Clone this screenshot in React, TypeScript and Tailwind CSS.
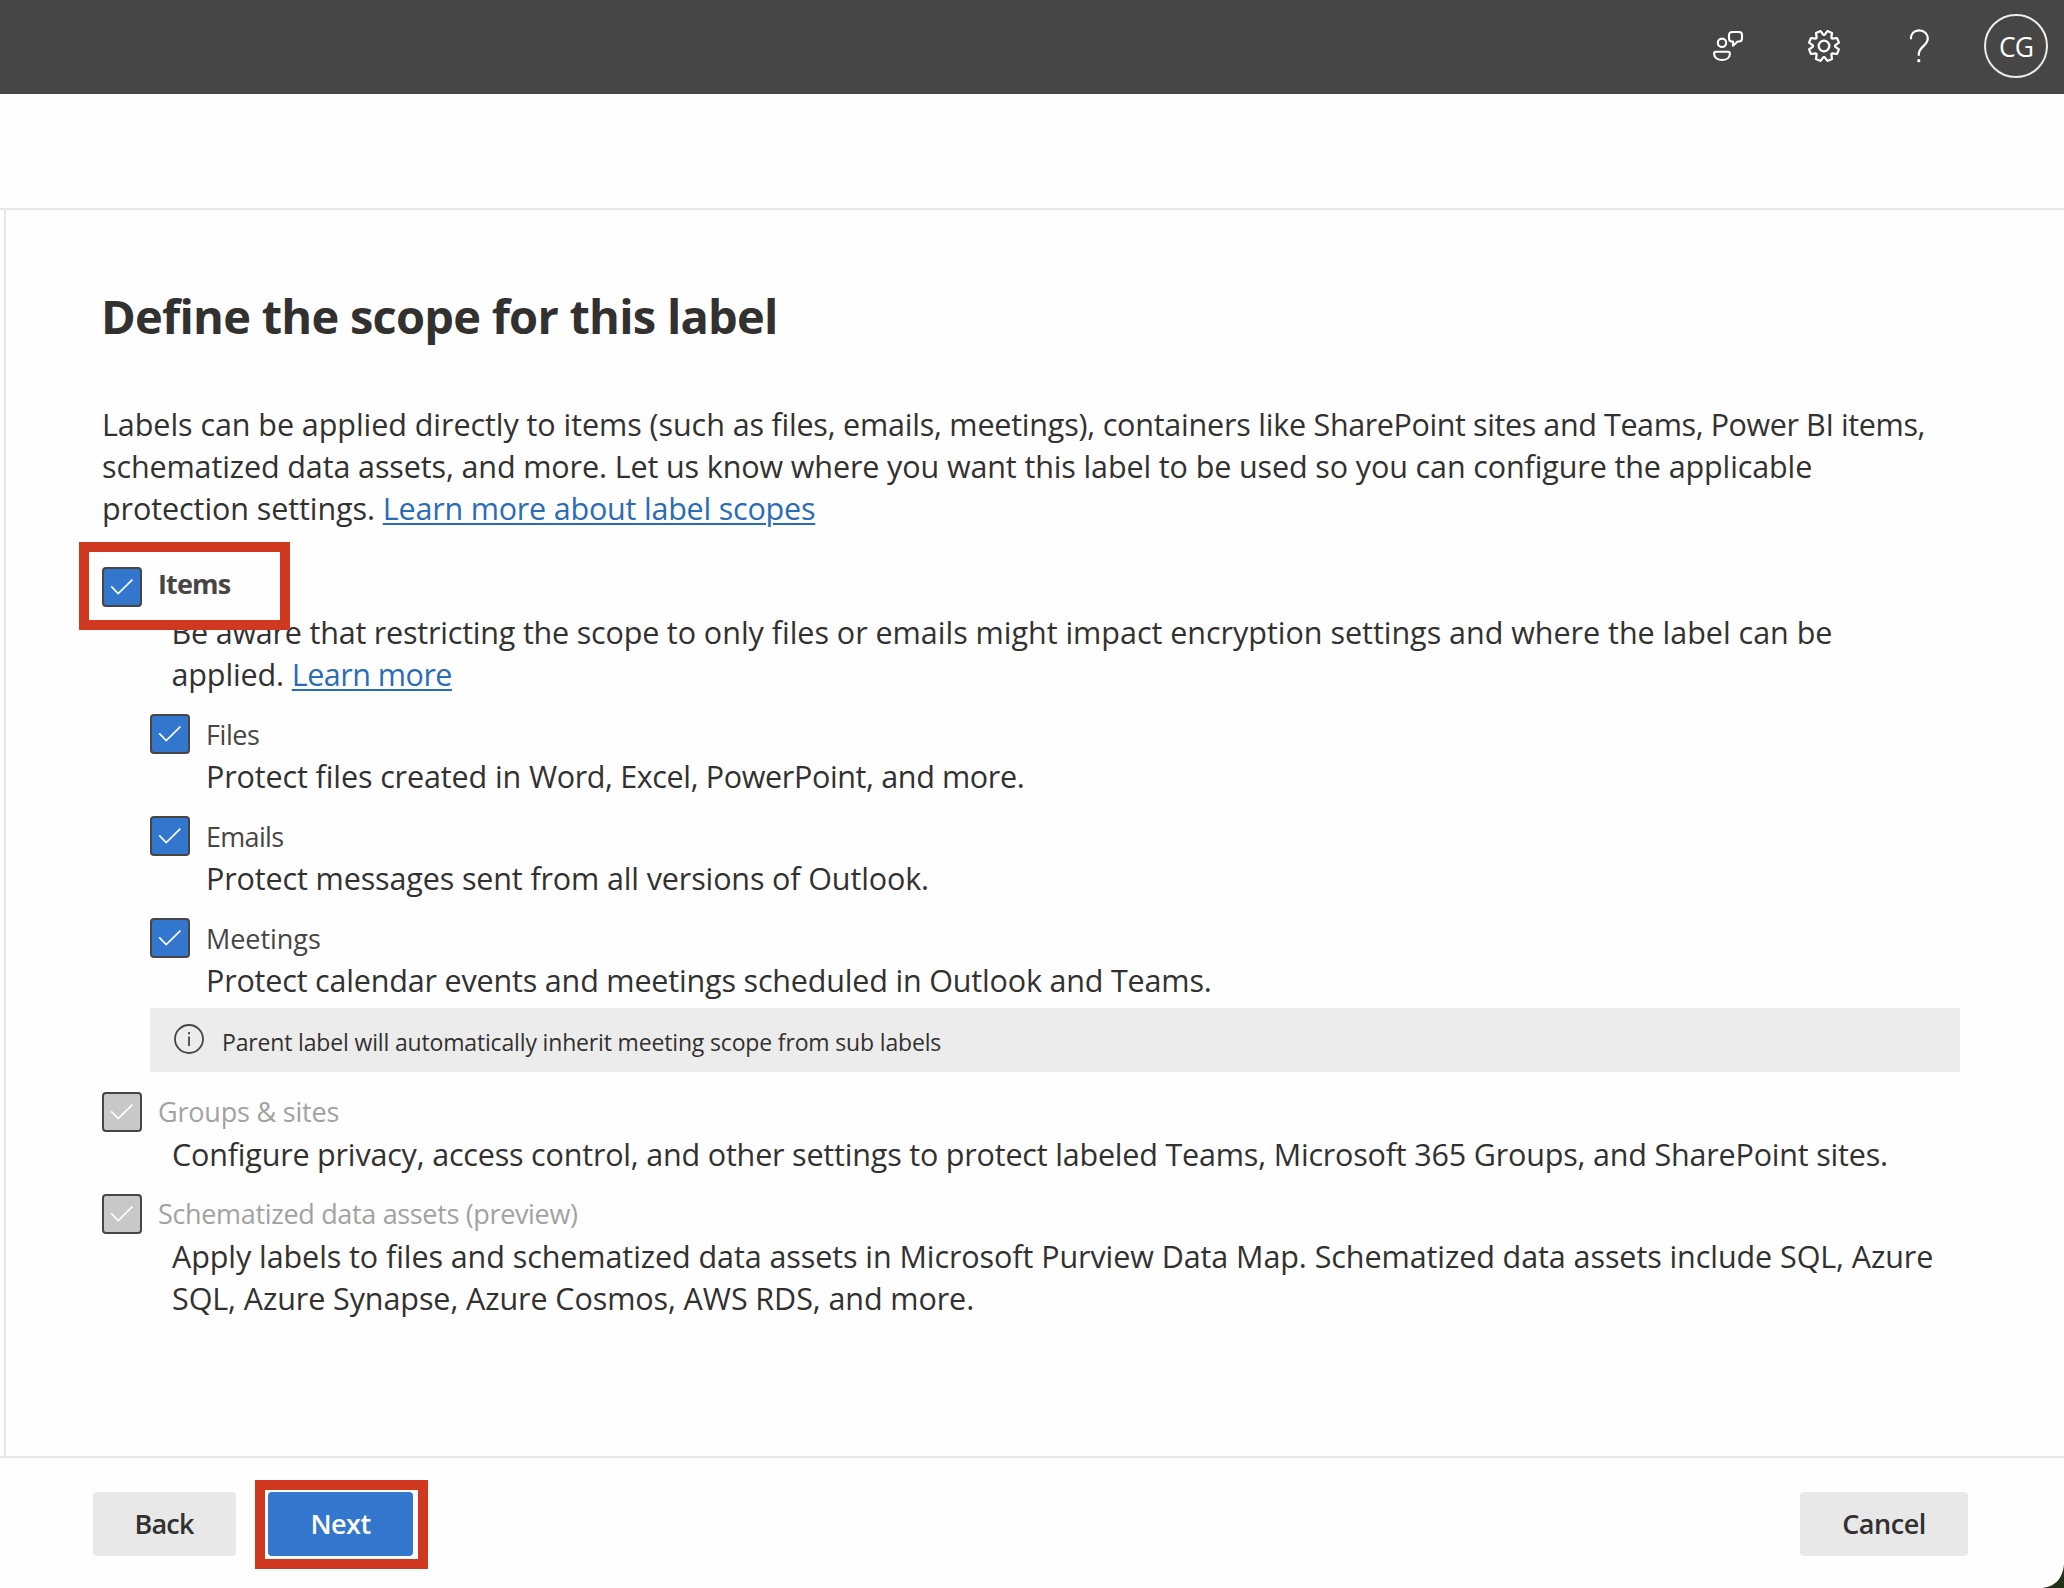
import React from "react";
import type { ReactNode } from "react";

const TOOTH: [number, number][] = [
  [759, -36], [759, 36], [1024, 235], [894, 550],
  [565, 502], [502, 565], [550, 894], [235, 1024],
];

const GEAR_POINTS = [0, 1, 2, 3]
  .flatMap((quarter) =>
    TOOTH.map(([x, y]) => {
      let p: [number, number] = [x, y];
      for (let i = 0; i < quarter; i++) p = [-p[1], p[0]];
      return `${p[0]},${p[1]}`;
    })
  )
  .join(" ");

function GearIcon() {
  return (
    <svg className="size-[34px]" viewBox="-1120 -1120 2240 2240" fill="none" stroke="white" strokeWidth="150">
      <polygon points={GEAR_POINTS} transform="scale(0.96)" strokeLinejoin="round" />
      <circle r="350" />
    </svg>
  );
}

function FeedbackIcon() {
  return (
    <svg className="size-8" viewBox="0 0 32 32" fill="none" stroke="white" strokeWidth="2.1" strokeLinejoin="round">
      <circle cx="10" cy="12.8" r="4.2" />
      <path d="M3.8 21.7h12.4c1 0 1.7.7 1.7 1.7 0 4-3.4 6.6-7.9 6.6s-7.9-2.6-7.9-6.6c0-1 .7-1.7 1.7-1.7z" />
      <path d="M20 2h7a3 3 0 0 1 3 3v3.5a3 3 0 0 1-3 3h-1.4l-4.6 4.2v-4.2h-1a3 3 0 0 1-3-3V5a3 3 0 0 1 3-3z" />
    </svg>
  );
}

function HelpIcon() {
  return (
    <svg className="h-9 w-6" viewBox="0 0 24 36" fill="none" stroke="white" strokeWidth="2.2">
      <path d="M2.8 11.3C2.8 6 6 2.4 11.2 2.4c5 0 8.6 3.4 8.6 8.2 0 7-9 8.2-9 15.6v1.6" />
      <rect x="9.4" y="31.3" width="2.8" height="2.8" fill="white" stroke="none" />
    </svg>
  );
}

function Checkbox({ disabled = false }: { disabled?: boolean }) {
  return (
    <span
      className={
        disabled
          ? "block size-10 shrink-0 rounded-[4px] border-2 border-[#484644] bg-[#c8c8c8]"
          : "block size-10 shrink-0 rounded-[4px] border-2 border-[#484644] bg-[#3276cd]"
      }
    >
      <svg className="size-9" viewBox="2 2 36 36" fill="none" stroke="white" strokeWidth="1.7">
        <path d="M9.2 19.4 16.2 26.5 30.4 12.6" />
      </svg>
    </span>
  );
}

function Option({ label, labelClass, disabled, children }: { label: string; labelClass: string; disabled?: boolean; children: ReactNode }) {
  return (
    <div>
      <div className="flex h-10 items-center gap-4">
        <Checkbox disabled={disabled} />
        <span className={labelClass}>{label}</span>
      </div>
      {children}
    </div>
  );
}

function Link({ className, children }: { className: string; children: ReactNode }) {
  return (
    <a href="#" className={className}>
      {children}
    </a>
  );
}

export default function App() {
  return (
    <div className="relative flex h-[1588px] w-[2064px] flex-col overflow-hidden bg-[#fefefe] font-['Open_Sans','Noto_Sans',sans-serif] whitespace-nowrap text-[#323130]">
      <header className="flex h-[94px] shrink-0 items-center justify-end bg-[#484644] pr-4 pb-[2px]">
        <FeedbackIcon />
        <div className="ml-[63px]">
          <GearIcon />
        </div>
        <div className="ml-[67px]">
          <HelpIcon />
        </div>
        <div className="ml-[52px] flex size-16 items-center justify-center rounded-full border-2 border-white/90 text-[26.5px] leading-[60px] font-medium tracking-[-1px] text-white">
          <span className="pt-px">CG</span>
        </div>
      </header>

      <div className="h-[116px] shrink-0 border-b-2 border-[#e6e6e6]" />

      <main className="ml-1 flex-1 border-l-2 border-[#e6e6e6] pt-[74px] pl-24">
        <h1 className="-ml-px text-[47px] leading-[64px] font-bold tracking-[-0.76px]">Define the scope for this label</h1>

        <div className="mt-[55px] text-[30.5px] leading-[42px]">
          <p className="tracking-[-0.217px]">
            <span className="tracking-[-0.06px]">Labels can be applied directly to items (such </span>
            as files, emails, meetings), containers like{" "}
            <span className="tracking-[-0.4px]">SharePoint sites and Teams, Power BI items,</span>
          </p>
          <p className="tracking-[-0.119px]">
            schematized data assets, and more. Let us know where you want this label to be used so you can configure the applicable
          </p>
          <p className="tracking-[-0.08px]">
            protection settings.{" "}
            <Link className="tracking-[-0.207px] text-[#2b6cb8] underline decoration-2 underline-offset-[3px]">Learn more about label scopes</Link>
          </p>
        </div>

        <div className="relative mt-[38px]">
          <Option label="Items" labelClass="relative -top-[3px] text-[27px] font-bold leading-10 tracking-[-0.85px] text-[#484644]">
            <div className="mt-1 pl-[69.5px] text-[30.5px] leading-[42px]">
              <p className="tracking-[-0.02px]">
                <span className="tracking-[-0.2px]">Be aware that restricting the scope </span>
                to only files or emails might impact encryption settings and where the label can be
              </p>
              <p className="tracking-[-0.13px]">
                applied.{" "}
                <Link className="tracking-[-0.5px] text-[#2b6cb8] underline decoration-2 underline-offset-[3px]">Learn more</Link>
              </p>
            </div>
          </Option>
          <div className="absolute -top-[25px] -left-[23px] h-[88px] w-[211px] border-[10px] border-[#d13820]" />
        </div>

        <div className="mt-[19px] flex flex-col gap-[19px] pl-12">
          <Option label="Files" labelClass="relative top-px text-[27px] leading-10 tracking-[-0.43px] text-[#484644]">
            <p className="mt-px pl-14 text-[30.5px] leading-[42px] tracking-[-0.25px]">
              <span className="tracking-[-0.12px]">Protect files created in </span>
              <span className="tracking-[-0.36px]">Word, Excel, PowerPoint, and more.</span>
            </p>
          </Option>
          <Option label="Emails" labelClass="relative top-px text-[27px] leading-10 tracking-[-0.7px] text-[#484644]">
            <p className="mt-px pl-14 text-[30.5px] leading-[42px] tracking-[-0.13px]">Protect messages sent from all versions of Outlook.</p>
          </Option>
          <Option label="Meetings" labelClass="relative top-px text-[27px] leading-10 tracking-[-0.04px] text-[#484644]">
            <p className="mt-px pl-14 text-[30.5px] leading-[42px] tracking-[-0.18px]">
              Protect calendar events and meetings scheduled in Outlook and Teams.
            </p>
          </Option>
        </div>

        <div className="mt-[7px] ml-12 flex h-16 w-[1810px] items-center bg-[#ececec] pl-6">
          <svg className="-mt-0.5 size-[30px]" viewBox="0 0 30 30" fill="none" stroke="#484644" strokeWidth="1.8">
            <circle cx="15" cy="15" r="14" />
            <path d="M15 12.6V22M15 8v2.2" />
          </svg>
          <span className="ml-[18px] pt-[3px] text-[23px] leading-8 tracking-[-0.16px]">
            Parent label will automatically inherit meeting scope from sub labels
          </span>
        </div>

        <div className="mt-5 flex flex-col gap-[19px]">
          <Option disabled label="Groups & sites" labelClass="text-[27px] leading-[38px] tracking-[-0.194px] text-[#a3a2a0]">
            <p className="mt-px pl-[70px] text-[30.5px] leading-[42px] tracking-[-0.188px]">
              Configure privacy, access control, and other settings to protect labeled Teams, Microsoft 365 Groups, and SharePoint sites.
            </p>
          </Option>
          <Option disabled label="Schematized data assets (preview)" labelClass="text-[27px] leading-[38px] tracking-[-0.34px] text-[#a3a2a0]">
            <div className="mt-px pl-[70px] text-[30.5px] leading-[42px]">
              <p className="tracking-[-0.079px]">
                Apply labels to files and schematized data assets in Microsoft Purview Data Map. Schematized data assets include SQL, Azure
              </p>
              <p className="tracking-[-0.088px]">SQL, Azure Synapse, Azure Cosmos, AWS RDS, and more.</p>
            </div>
          </Option>
        </div>
      </main>

      <footer className="flex h-[132px] shrink-0 items-start border-t-2 border-[#e6e6e6] pt-[34px] pr-24 pl-[93px] text-[27px] font-semibold">
        <button className="h-16 w-[143px] rounded-[4px] bg-[#e8e8e8] pr-px leading-[64px] tracking-[-0.8px]">Back</button>
        <div className="relative ml-8">
          <button className="block h-16 w-[145px] rounded-[4px] bg-[#3276cd] leading-[64px] tracking-[-0.525px] text-white">Next</button>
          <div className="absolute -top-3 -left-[13px] h-[89px] w-[173px] border-[10px] border-[#d13820]" />
        </div>
        <button className="ml-auto h-16 w-[168px] rounded-[4px] bg-[#e8e8e8] leading-[64px] tracking-[-0.478px]">Cancel</button>
      </footer>

      <svg className="absolute right-0 bottom-0 size-6" viewBox="0 0 24 24">
        <path d="M24 0v24H0C14 24 23 15 24 0z" fill="#223018" />
      </svg>
    </div>
  );
}
